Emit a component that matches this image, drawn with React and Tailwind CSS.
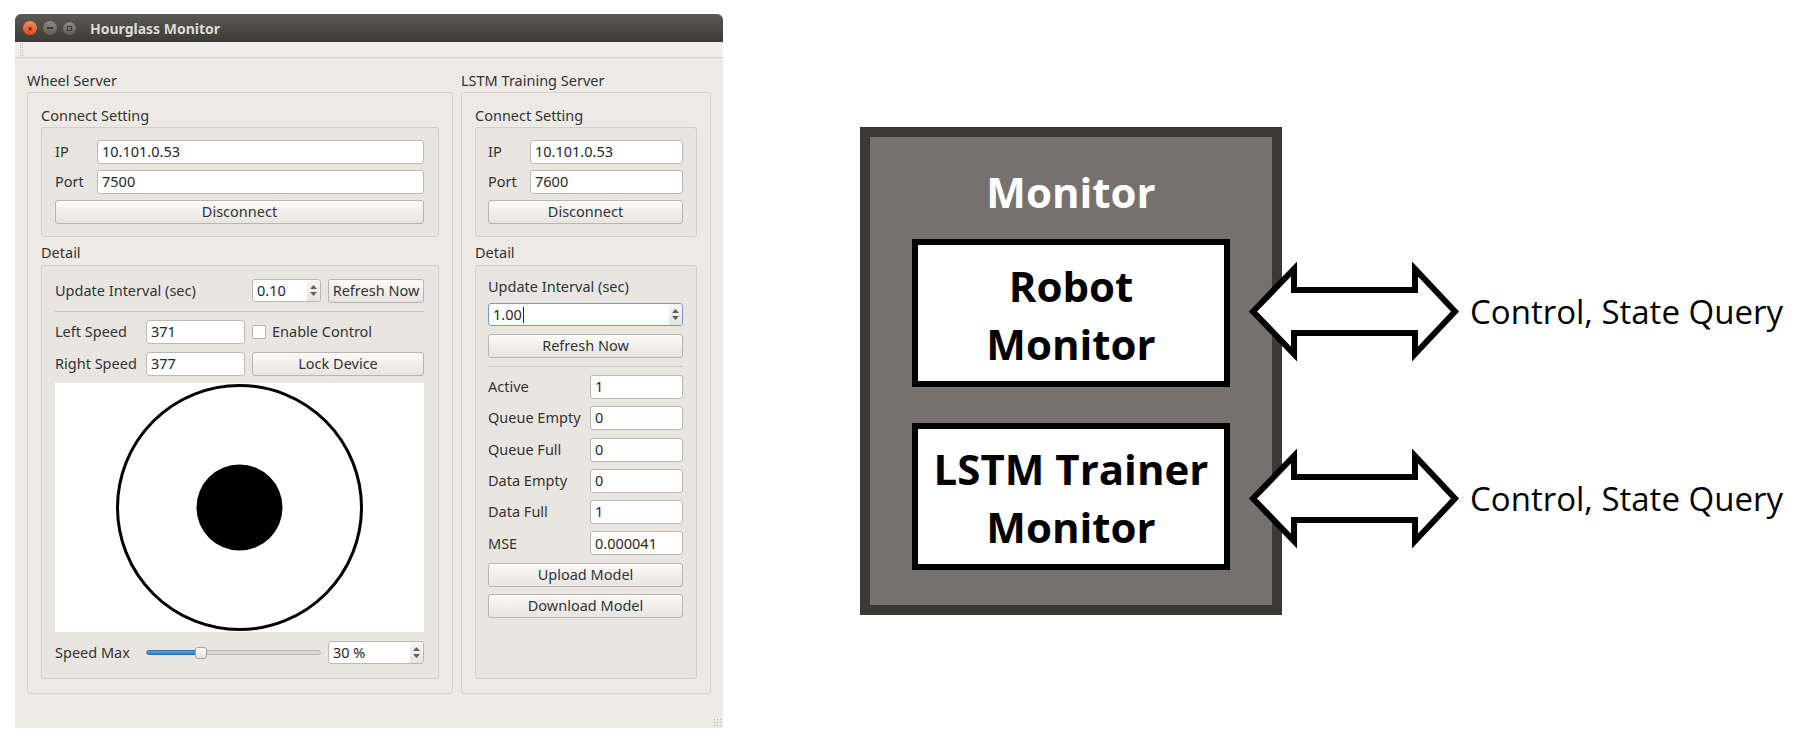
import React from "react";

const ui = "font-['Noto_Sans','DejaVu_Sans',sans-serif] text-[14.5px] text-[#333333]";

function Field({ value, className = "" }) {
    return (
        <div className={`h-[24px] bg-white border border-[#bdb8b1] rounded-[3px] flex items-center pl-[4px] text-[#262626] ${className}`}>
            {value}
        </div>
    );
}

function Btn({ children, className = "" }) {
    return (
        <div className={`h-[24px] rounded-[3px] border border-[#bab5ae] bg-linear-to-b from-[#fbfaf9] to-[#e7e5e2] flex items-center justify-center text-[#333333] ${className}`}>
            {children}
        </div>
    );
}

function Spin({ value, className = "", focus = false }) {
    return (
        <div className={`h-[23px] bg-white border rounded-[3px] flex ${focus ? "border-[#6d9fd5]" : "border-[#bdb8b1]"} ${className}`}>
            <div className="flex-1 flex items-center pl-[4px] text-[#262626]">
                {value}
                {focus && <span className="w-px h-[16px] bg-[#222] ml-[1px]" />}
            </div>
            <div className="w-[13px] flex flex-col items-center justify-center gap-[3px] bg-linear-to-b from-[#f7f6f5] to-[#e6e4e1] rounded-r-[3px]">
                <svg width="7" height="4" viewBox="0 0 7 4"><path d="M0 4 L3.5 0 L7 4Z" fill="#5f5f5f" /></svg>
                <svg width="7" height="4" viewBox="0 0 7 4"><path d="M0 0 L3.5 4 L7 0Z" fill="#5f5f5f" /></svg>
            </div>
        </div>
    );
}

function Separator({ className = "" }) {
    return <div className={`h-px bg-[#c9c4be] ${className}`} />;
}

function Arrow() {
    return (
        <svg width="216" height="100" viewBox="0 0 216 100">
            <path
                d="M7 49.5 L48 7 L48 28 L169 28 L169 7 L209 49.5 L169 92 L169 71 L48 71 L48 92 Z"
                fill="white"
                stroke="black"
                strokeWidth="6"
                strokeLinejoin="miter"
            />
        </svg>
    );
}

function Window() {
    return (
        <div className={`w-[708px] h-[714px] ml-[15px] mt-[14px] flex flex-col rounded-t-[6px] overflow-hidden shrink-0 ${ui}`}>
            {/* title bar */}
            <div className="h-[28px] bg-linear-to-b from-[#5b5954] to-[#3c3b37] flex items-center pl-[8px]">
                <div className="w-[14px] h-[14px] rounded-full bg-linear-to-b from-[#f58a5c] to-[#df4b16] flex items-center justify-center text-[9px] font-bold text-[#5a2a12] leading-none">×</div>
                <div className="w-[14px] h-[14px] rounded-full bg-linear-to-b from-[#8d8b85] to-[#5f5d58] ml-[6px] flex items-center justify-center">
                    <div className="w-[6px] h-[2px] bg-[#3c3b37]" />
                </div>
                <div className="w-[13px] h-[13px] rounded-full bg-linear-to-b from-[#8d8b85] to-[#5f5d58] ml-[6px] flex items-center justify-center">
                    <div className="w-[5px] h-[5px] border border-[#3c3b37]" />
                </div>
                <span className="ml-[14px] text-[14px] font-bold text-[#dfdbd2]">Hourglass Monitor</span>
            </div>
            {/* toolbar strip */}
            <div className="h-[16px] bg-[#f1efec] border-b border-[#cfcac4] flex items-stretch pl-[5px]">
                <div className="w-[3px] border-l border-r border-dotted border-[#c4bfb8] my-[1px]" />
            </div>
            {/* body */}
            <div className="flex-1 bg-[#edeae6] pt-[12px] px-[12px] flex gap-[8px] relative">
                {/* Wheel Server */}
                <div className="w-[426px] flex flex-col">
                    <div className="h-[22px] flex items-center">Wheel Server</div>
                    <div className="h-[602px] border border-[#d7d3ce] rounded-[3px] px-[13px] pt-[12px] flex flex-col">
                        <div className="h-[22px] flex items-center">Connect Setting</div>
                        <div className="h-[110px] border border-[#d3cfc9] rounded-[3px] pl-[13px] pr-[14px] pt-[12px] flex flex-col gap-[7px] bg-[#e9e6e2]">
                            <div className="h-[23px] flex items-center">
                                <span className="w-[42px]">IP</span>
                                <Field value="10.101.0.53" className="flex-1 h-[23px]" />
                            </div>
                            <div className="h-[23px] flex items-center">
                                <span className="w-[42px]">Port</span>
                                <Field value="7500" className="flex-1 h-[23px]" />
                            </div>
                            <Btn className="h-[23px]">Disconnect</Btn>
                        </div>
                        <div className="h-[28px] pt-[4px] flex items-center">Detail</div>
                        <div className="h-[414px] border border-[#d3cfc9] rounded-[3px] pl-[13px] pr-[14px] pt-[13px] flex flex-col bg-[#e9e6e2]">
                            <div className="h-[23px] flex items-center">
                                <span className="flex-1">Update Interval (sec)</span>
                                <Spin value="0.10" className="w-[69px]" />
                                <Btn className="w-[96px] ml-[7px] h-[23px]">Refresh Now</Btn>
                            </div>
                            <Separator className="mt-[9px]" />
                            <div className="h-[24px] mt-[8px] flex items-center">
                                <span className="w-[91px]">Left Speed</span>
                                <Field value="371" className="w-[99px]" />
                                <div className="w-[14px] h-[14px] ml-[7px] bg-white border border-[#b8b3ac] rounded-[2px]" />
                                <span className="ml-[6px]">Enable Control</span>
                            </div>
                            <div className="h-[24px] mt-[8px] flex items-center">
                                <span className="w-[91px]">Right Speed</span>
                                <Field value="377" className="w-[99px]" />
                                <Btn className="w-[172px] ml-[7px]">Lock Device</Btn>
                            </div>
                            <div className="h-[249px] mt-[7px] bg-white">
                                <svg width="369" height="249" viewBox="0 0 369 249">
                                    <circle cx="184.5" cy="124.5" r="122" fill="white" stroke="black" strokeWidth="3" />
                                    <circle cx="184.5" cy="124.5" r="43" fill="black" />
                                </svg>
                            </div>
                            <div className="h-[23px] mt-[9px] flex items-center">
                                <span className="w-[91px]">Speed Max</span>
                                <div className="w-[175px] h-[12px] flex items-center">
                                    <div className="w-[50px] h-[5px] rounded-l-[3px] bg-linear-to-b from-[#5aa7e6] to-[#2f80c8] border border-[#2a73b5]" />
                                    <div className="w-[12px] h-[12px] -mx-[1px] rounded-[3px] bg-linear-to-b from-white to-[#e4e2df] border border-[#a8a39c] relative" />
                                    <div className="flex-1 h-[5px] rounded-r-[3px] bg-[#dcd9d5] border border-[#bdb8b1]" />
                                </div>
                                <Spin value="30 %" className="w-[96px] ml-[7px]" />
                            </div>
                        </div>
                    </div>
                </div>
                {/* LSTM Training Server */}
                <div className="w-[252px] flex flex-col">
                    <div className="h-[22px] flex items-center">LSTM Training Server</div>
                    <div className="h-[602px] border border-[#d7d3ce] rounded-[3px] px-[13px] pt-[12px] flex flex-col">
                        <div className="h-[22px] flex items-center">Connect Setting</div>
                        <div className="h-[110px] border border-[#d3cfc9] rounded-[3px] pl-[12px] pr-[13px] pt-[12px] flex flex-col gap-[7px] bg-[#e9e6e2]">
                            <div className="h-[23px] flex items-center">
                                <span className="w-[42px]">IP</span>
                                <Field value="10.101.0.53" className="flex-1 h-[23px]" />
                            </div>
                            <div className="h-[23px] flex items-center">
                                <span className="w-[42px]">Port</span>
                                <Field value="7600" className="flex-1 h-[23px]" />
                            </div>
                            <Btn className="h-[23px]">Disconnect</Btn>
                        </div>
                        <div className="h-[28px] pt-[4px] flex items-center">Detail</div>
                        <div className="h-[414px] border border-[#d3cfc9] rounded-[3px] pl-[12px] pr-[13px] pt-[10px] flex flex-col bg-[#e9e6e2]">
                            <div className="h-[22px] flex items-center">Update Interval (sec)</div>
                            <Spin value="1.00" focus className="mt-[5px]" />
                            <Btn className="mt-[8px]">Refresh Now</Btn>
                            <Separator className="mt-[8px]" />
                            <div className="mt-[8px] flex flex-col gap-[7.3px]">
                                {[
                                    ["Active", "1"],
                                    ["Queue Empty", "0"],
                                    ["Queue Full", "0"],
                                    ["Data Empty", "0"],
                                    ["Data Full", "1"],
                                    ["MSE", "0.000041"],
                                ].map(([label, value]) => (
                                    <div key={label} className="h-[24px] flex items-center">
                                        <span className="w-[102px]">{label}</span>
                                        <Field value={value} className="flex-1" />
                                    </div>
                                ))}
                                <Btn>Upload Model</Btn>
                                <Btn>Download Model</Btn>
                            </div>
                        </div>
                    </div>
                </div>
                {/* resize grip */}
                <div className="absolute right-[2px] bottom-[2px] w-[8px] h-[8px] bg-[radial-gradient(#b9b4ad_1px,transparent_1px)] bg-[length:3px_3px]" />
            </div>
        </div>
    );
}

function Diagram() {
    return (
        <div className="flex items-start mt-[127px] ml-[137px] shrink-0">
            <div className="w-[422px] h-[488px] border-[10px] border-[#3b3937] bg-[#76716f] flex flex-col items-center font-['Open_Sans',sans-serif] font-bold">
                <div className="h-[102px] flex items-center text-[42px] text-white leading-none pt-[8px]">Monitor</div>
                <div className="w-[318px] h-[148px] border-[6px] border-black bg-white flex flex-col items-center justify-center text-[42px] text-black leading-[58px] pt-[4px]">
                    <span>Robot</span>
                    <span>Monitor</span>
                </div>
                <div className="w-[318px] h-[147px] mt-[36px] border-[6px] border-black bg-white flex flex-col items-center justify-center text-[42px] text-black leading-[58px] pt-[2px]">
                    <span>LSTM Trainer</span>
                    <span>Monitor</span>
                </div>
            </div>
            <div className="relative -ml-[36px] mt-[135px] flex flex-col gap-[87px]">
                {[0, 1].map((i) => (
                    <div key={i} className="h-[100px] flex items-center">
                        <Arrow />
                        <span className="ml-[8px] font-['Open_Sans',sans-serif] text-[33px] text-black whitespace-nowrap">
                            Control, State Query
                        </span>
                    </div>
                ))}
            </div>
        </div>
    );
}

export default function App() {
    return (
        <div className="w-[1805px] h-[745px] bg-white flex items-start overflow-hidden">
            <Window />
            <Diagram />
        </div>
    );
}
